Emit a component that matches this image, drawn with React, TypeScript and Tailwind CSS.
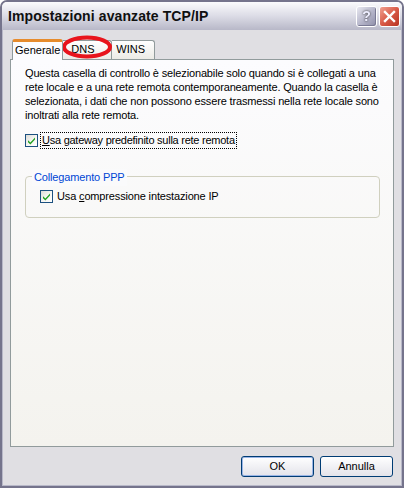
import React from "react";

const Check = ({ className = "" }: { className?: string }) => (
  <div
    className={`w-[13px] h-[13px] border border-[#1c5180] bg-gradient-to-br from-[#dcdcd7] via-[#f5f5f1] to-white flex items-center justify-center shrink-0 ${className}`}
  >
    <svg width="9" height="9" viewBox="0 0 9 9">
      <path d="M1 4.2 L3.4 6.6 L8 1.6 L8 3.6 L3.4 8.6 L1 6.2 Z" fill="#21a121" />
    </svg>
  </div>
);

const App = () => {
  return (
    <div className="w-[404px] h-[488px] relative bg-[#e0dfe3] border-[2px] border-[#75748c] rounded-t-[7px] flex flex-col font-['Liberation_Sans',sans-serif] text-[11px] text-black overflow-hidden">
      <div className="h-[28px] shrink-0 bg-gradient-to-b from-[#fbfbfd] via-[#dcdce6] to-[#b8b8c8] flex items-center justify-between pl-[6px] pr-[2px]">
        <div className="text-[14px] font-bold text-[#101010] tracking-[0.1px]">Impostazioni avanzate TCP/IP</div>
        <div className="flex gap-[2px]">
          <div className="w-[21px] h-[21px] rounded-[3px] border border-white bg-gradient-to-br from-[#e8e8f0] via-[#b8b8cc] to-[#8e8ea8] flex items-center justify-center text-white font-bold text-[14px] shadow-[inset_-1px_-1px_0_#7a7a94]">
            <span className="text-[#eef] drop-shadow-[0_0_1px_#333]">?</span>
          </div>
          <div className="w-[21px] h-[21px] rounded-[3px] border border-white bg-gradient-to-br from-[#f0a090] via-[#d85a48] to-[#b83020] flex items-center justify-center">
            <svg width="13" height="13" viewBox="0 0 13 13">
              <path d="M2 2 L11 11 M11 2 L2 11" stroke="white" strokeWidth="2.4" strokeLinecap="square" />
            </svg>
          </div>
        </div>
      </div>

      <div className="flex-1 flex flex-col border-l border-r border-b border-[#b8b8c8] px-[7px]">
        <div className="flex items-end h-[29px] pl-[2px] relative">
          <div className="h-[21px] px-[2px] pb-[1px] bg-[#fcfcfe] border border-b-0 border-[#919b9c] border-t-[3px] border-t-[#e68b2c] rounded-t-[3px] relative z-10 -mb-px flex items-center">
            Generale
          </div>
          <div className="h-[19px] w-[49px] pl-[8px] pb-[1px] bg-gradient-to-b from-white to-[#ecebe6] border border-b-0 border-l-0 border-[#919b9c] rounded-tr-[3px] flex items-center">
            DNS
          </div>
          <div className="h-[19px] w-[43px] pl-[4px] pb-[1px] bg-gradient-to-b from-white to-[#ecebe6] border border-b-0 border-l-0 border-[#919b9c] rounded-tr-[3px] flex items-center">
            WINS
          </div>
          <svg className="absolute left-[49px] top-[2px]" width="56" height="30" viewBox="0 0 56 30">
            <ellipse cx="28" cy="15" rx="23" ry="9.5" fill="none" stroke="#e8141c" strokeWidth="4" />
          </svg>
        </div>

        <div className="h-[388px] bg-gradient-to-b from-[#fcfcfe] to-[#f4f3ee] border border-[#919b9c] pl-[14px] pr-[12px] pt-[6px] flex flex-col">
          <p className="leading-[14px] tracking-[-0.15px]">
            Questa casella di controllo è selezionabile solo quando si è collegati a una rete locale e a una rete remota contemporaneamente. Quando la casella è selezionata, i dati che non possono essere trasmessi nella rete locale sono inoltrati alla rete remota.
          </p>
          <div className="flex items-center mt-[10px]">
            <Check />
            <span className="ml-[2px] px-[1px] border border-dotted border-black leading-[15px] tracking-[-0.25px]">
              <span className="underline">U</span>sa gateway predefinito sulla rete remota
            </span>
          </div>
          <div className="mt-[27px] h-[42px] border border-[#d0d0bf] rounded-[4px] relative mr-[1px]">
            <span className="absolute -top-[8px] left-[6px] px-[2px] bg-[#fafafb] text-[#0046d5] tracking-[-0.15px]">Collegamento PPP</span>
            <div className="flex items-center mt-[11px] ml-[14px]">
              <Check />
              <span className="ml-[4px] tracking-[-0.15px]">
                Usa <span className="underline">c</span>ompressione intestazione IP
              </span>
            </div>
          </div>
        </div>

        <div className="flex justify-end gap-[6px] mt-[9px] pr-[1px]">
          <button className="w-[73px] h-[21px] rounded-[3px] border border-[#003c74] bg-gradient-to-b from-white to-[#e3e3ea] shadow-[inset_0_0_0_1px_#9ab5e6] text-[11px]">
            OK
          </button>
          <button className="w-[73px] h-[21px] rounded-[3px] border border-[#003c74] bg-gradient-to-b from-white to-[#e3e3ea] text-[11px]">
            Annulla
          </button>
        </div>
      </div>
    </div>
  );
};

export default App;
